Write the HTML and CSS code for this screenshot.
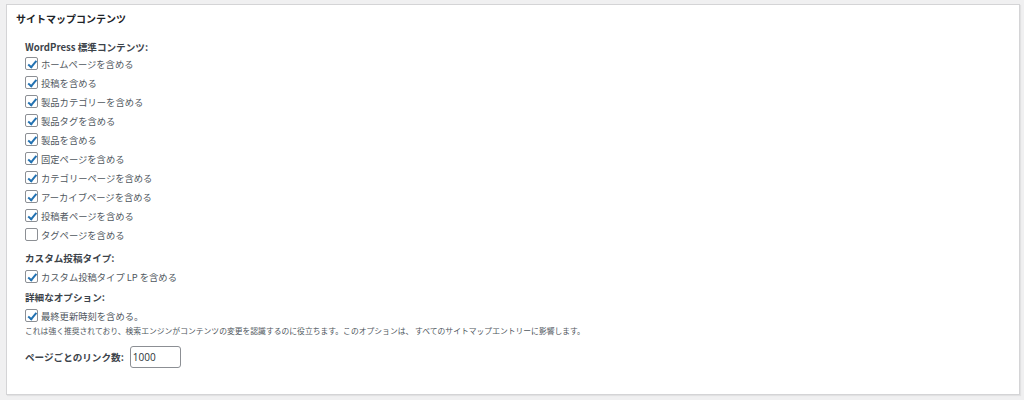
FILE: index.html
```html
<!DOCTYPE html>
<html lang="ja">
<head>
<meta charset="utf-8">
<title>サイトマップコンテンツ</title>
<link rel="stylesheet" href="styles.css">
</head>
<body>
<div class="panel">
  <h2 class="title">サイトマップコンテンツ</h2>
  <div class="body">
    <div class="group-label">WordPress 標準コンテンツ:</div>
    <ul class="list first">
      <li><span class="cb on"></span>ホームページを含める</li>
      <li><span class="cb on"></span>投稿を含める</li>
      <li><span class="cb on"></span>製品カテゴリーを含める</li>
      <li><span class="cb on"></span>製品タグを含める</li>
      <li><span class="cb on"></span>製品を含める</li>
      <li><span class="cb on"></span>固定ページを含める</li>
      <li><span class="cb on"></span>カテゴリーページを含める</li>
      <li><span class="cb on"></span>アーカイブページを含める</li>
      <li><span class="cb on"></span>投稿者ページを含める</li>
      <li><span class="cb"></span>タグページを含める</li>
    </ul>
    <div class="group-label sub">カスタム投稿タイプ:</div>
    <ul class="list">
      <li><span class="cb on"></span>カスタム投稿タイプ LP を含める</li>
    </ul>
    <div class="group-label sub">詳細なオプション:</div>
    <ul class="list last">
      <li><span class="cb on"></span>最終更新時刻を含める。</li>
    </ul>
    <p class="desc">これは強く推奨されており、検索エンジンがコンテンツの変更を認識するのに役立ちます。このオプションは、 すべてのサイトマップエントリーに影響します。</p>
    <div class="links-row">
      <span class="links-label">ページごとのリンク数:</span>
      <span class="input">1000</span>
    </div>
  </div>
</div>
</body>
</html>
```
FILE: styles.css
```css
html, body {
  margin: 0;
  padding: 0;
  background: #f0f0f1;
}
body {
  padding: 4px 4px 4px 6px;
  font-family: "Noto Sans CJK JP", "Noto Sans", sans-serif;
  color: #50575e;
}
.panel {
  background: #fff;
  border: 1px solid #d4d4d6;
  box-shadow: 1px 1px 1px rgba(0,0,0,0.06);
  height: 391px;
  box-sizing: border-box;
}
.title {
  margin: 0;
  padding: 6px 9px 0;
  font-size: 10px;
  font-weight: bold;
  line-height: 16px;
  color: #1d2327;
}
.body {
  padding: 13px 18px 0;
}
.group-label {
  font-size: 9.6px;
  font-weight: bold;
  line-height: 14px;
  color: #3c434a;
  margin-bottom: 0;
}
.group-label.sub {
  margin-bottom: 2px;
}
.list {
  list-style: none;
  margin: 0 0 4px;
  padding: 0;
}
.list.first {
  margin-bottom: 7px;
}
.list.last {
  margin-bottom: 0;
}
.list li {
  display: flex;
  align-items: center;
  height: 19px;
  font-size: 9.3px;
  line-height: 14px;
}
.cb {
  width: 11px;
  height: 11px;
  border: 1px solid #8c8f94;
  border-radius: 2px;
  margin-right: 3px;
  position: relative;
  flex: none;
  background: #fff;
}
.cb.on::after {
  content: "";
  position: absolute;
  left: 3.5px;
  top: 0.5px;
  width: 3px;
  height: 6.5px;
  border-right: 2px solid #2271b1;
  border-bottom: 2px solid #2271b1;
  transform: rotate(40deg);
}
.desc {
  margin: 0;
  font-size: 7.8px;
  line-height: 12px;
  color: #50575e;
}
.links-row {
  display: flex;
  align-items: center;
  margin-top: 9px;
}
.links-label {
  font-size: 9.6px;
  font-weight: bold;
  color: #3c434a;
  margin-right: 6px;
}
.input {
  width: 51px;
  height: 22px;
  box-sizing: border-box;
  border: 1px solid #8c8f94;
  border-radius: 3px;
  font-size: 10px;
  line-height: 20px;
  padding-left: 2px;
  color: #2c3338;
  font-family: "Open Sans", "Noto Sans", sans-serif;
}
```
